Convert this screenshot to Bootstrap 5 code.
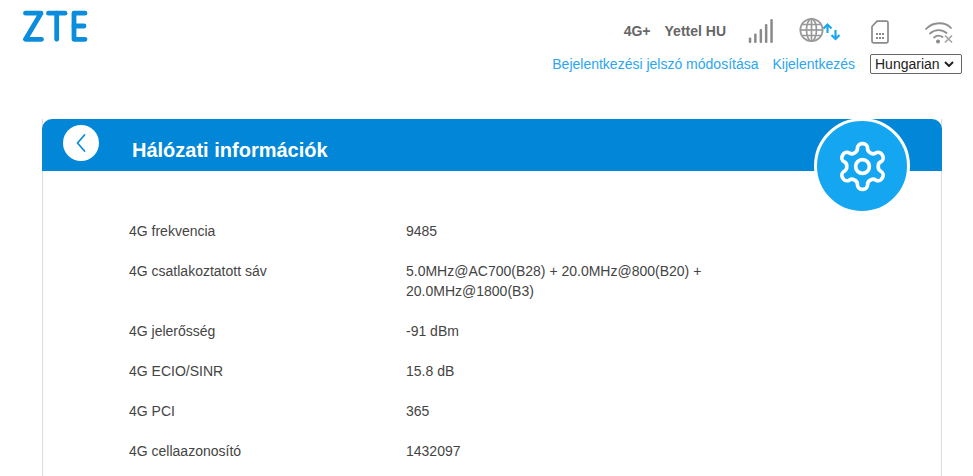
<!DOCTYPE html>
<html lang="hu">
<head>
<meta charset="utf-8">
<title>Hálózati információk</title>
<link rel="stylesheet" href="https://cdn.jsdelivr.net/npm/bootstrap@5.3.0/dist/css/bootstrap.min.css">
<style>
html, body { height: 476px; overflow: hidden; }
body { font-family: "Liberation Sans", Arial, sans-serif; font-size: 14px; color: #444; background: #fff; }
.top-head { height: 119px; padding: 10px 11px 0 23px; }
.status-text { font-weight: 700; font-size: 14px; color: #666; line-height: 16px; }
.status-row { height: 34px; margin-top: 4px; }
.gap-net { margin-left: 14px; margin-right: 21px; }
.ico-signal { margin-right: 26px; }
.ico-globe { margin-right: 31px; margin-top: -2px; }
.ico-sim { margin-right: 36px; margin-top: 2px; }
.ico-wifi { margin-right: 8px; margin-top: 3px; }
.links-row { height: 20px; margin-top: 6px; column-gap: 14px; }
.links-row a { color: #2ba6f0; text-decoration: none; line-height: 20px; }
.lang-select { appearance: none; width: 92px; height: 20px; margin-left: 1px; padding: 0 0 0 4px; font-size: 14px; line-height: 18px; font-family: inherit; color: #222; background: #fff url("data:image/svg+xml,%3Csvg xmlns='http://www.w3.org/2000/svg' width='10' height='6' viewBox='0 0 10 6'%3E%3Cpolyline points='1,1 5,5 9,1' fill='none' stroke='%23222' stroke-width='2'/%3E%3C/svg%3E") no-repeat right 7px center; border: 1px solid #666; border-radius: 2px; }
.info-panel { margin: 0 31px 0 42px; height: 357px; position: relative; border-left: 1px solid #ddd; border-right: 1px solid #ddd; }
.info-head { margin: 0 -1px; height: 52px; background: #0287d8; border-radius: 10px 10px 0 0; padding: 6px 0 0 21px; }
.back-btn { width: 36px; height: 36px; background: #fff; border-radius: 50%; }
.info-title { font-size: 20px; font-weight: 700; color: #fff; line-height: 24px; margin: 13px 0 0 33px; }
.gear-badge { position: absolute; top: -1px; right: 31px; width: 96px; height: 96px; background: #15a6f1; border: 3px solid #fff; border-radius: 50%; }
.info-list { padding: 40px 0 0 86px; }
.info-line { padding: 10px 0; line-height: 20px; }
.info-key { width: 277px; flex: none; }
.info-val { width: 310px; }
</style>
</head>
<body>
<header class="top-head d-flex justify-content-between align-items-start">
  <svg width="66" height="34" viewBox="0 0 66 34" aria-label="ZTE" role="img">
    <g fill="none" stroke="#0a8ddc" stroke-width="4.8" stroke-linecap="round" stroke-linejoin="round">
      <polyline points="2.5,3.200 18,3.200 2.500,29.300 18.500,29.300"/>
      <polyline points="25.500,3.200 42,3.200"/>
      <line x1="33.700" y1="3.200" x2="33.700" y2="29.300"/>
      <polyline points="62,3.200 51,3.200 51,29.300 62,29.300"/>
      <line x1="51" y1="16" x2="61" y2="16"/>
    </g>
  </svg>
  <div class="d-flex flex-column align-items-end">
    <div class="status-row d-flex align-items-center">
      <span class="status-text">4G+</span>
      <span class="status-text gap-net">Yettel HU</span>
      <svg class="ico-signal" width="26" height="24" viewBox="0 0 26 24">
        <g fill="#8a8a8a">
          <rect x="1.800" y="18.500" width="2.500" height="5.500" rx="1"/>
          <rect x="7.100" y="14.500" width="2.500" height="9.500" rx="1"/>
          <rect x="12.600" y="10" width="2.500" height="14" rx="1"/>
          <rect x="17.900" y="5" width="2.500" height="19" rx="1"/>
          <rect x="23.300" y="0" width="2.500" height="24" rx="1"/>
        </g>
      </svg>
      <svg class="ico-globe" width="41" height="26" viewBox="0 0 41 26">
        <g fill="none" stroke="#999" stroke-width="1.700">
          <circle cx="12.500" cy="13" r="11.200"/>
          <ellipse cx="12.500" cy="13" rx="5" ry="11.200"/>
          <line x1="12.500" y1="2" x2="12.500" y2="24"/>
          <line x1="1.300" y1="13" x2="23.700" y2="13"/>
          <path d="M3 7.500h19M3 18.500h19"/>
        </g>
        <g fill="none" stroke="#1ca7ee" stroke-width="2.200">
          <path d="M28.500 16V7.500M24.500 11.500l4-4 4 4"/>
          <path d="M36.500 13v8.500M32.500 18l4 4 4-4"/>
        </g>
      </svg>
      <svg class="ico-sim" width="18" height="24" viewBox="0 0 18 24">
        <path d="M6 1.200h9.500a1.500 1.500 0 0 1 1.500 1.500v18.600a1.500 1.500 0 0 1-1.500 1.500h-13a1.500 1.500 0 0 1-1.500-1.500V6.500z" fill="none" stroke="#8a8a8a" stroke-width="1.700" stroke-linejoin="round"/>
        <g fill="#8a8a8a">
          <rect x="5" y="13" width="2" height="2"/><rect x="8" y="13" width="2" height="2"/><rect x="11" y="13" width="2" height="2"/>
          <rect x="5" y="17" width="2" height="2"/><rect x="8" y="17" width="2" height="2"/><rect x="11" y="17" width="2" height="2"/>
        </g>
      </svg>
      <svg class="ico-wifi" width="29" height="22" viewBox="0 0 29 22">
        <g fill="none" stroke="#8f8f8f" stroke-width="1.800" stroke-linecap="round">
          <path d="M1 7C8-0.500 20-0.500 26 6"/>
          <path d="M5 11.500c5-4.500 12-4.500 16.500-.5"/>
          <path d="M9 15.500c2.500-2.200 6-2.200 8.500-.5"/>
        </g>
        <circle cx="13" cy="19.500" r="2" fill="#8a8a8a"/>
        <path d="M20 13.500l7 7M27 13.500l-7 7" fill="none" stroke="#a5a5a5" stroke-width="1.700"/>
      </svg>
    </div>
    <div class="links-row d-flex align-items-center">
      <a href="#">Bejelentkezési jelszó módosítása</a>
      <a href="#">Kijelentkezés</a>
      <select class="lang-select" aria-label="Nyelv"><option>Hungarian</option></select>
    </div>
  </div>
</header>
<main class="info-panel">
  <div class="info-head d-flex align-items-start">
    <a href="#" class="back-btn d-flex align-items-center justify-content-center" aria-label="Vissza">
      <svg width="12" height="20" viewBox="0 0 12 20"><polyline points="9.500,2 2.500,10 9.500,18" fill="none" stroke="#0a8ddc" stroke-width="1.800" stroke-linecap="round" stroke-linejoin="round"/></svg>
    </a>
    <div class="info-title">Hálózati információk</div>
  </div>
  <div class="gear-badge d-flex align-items-center justify-content-center">
    <svg width="55" height="55" viewBox="0 0 24 24" fill="none" stroke="#fff" stroke-width="1.600" stroke-linejoin="round">
      <path d="M12.220 2h-.440a2 2 0 0 0-2 2v.180a2 2 0 0 1-1 1.730l-.430.250a2 2 0 0 1-2 0l-.150-.080a2 2 0 0 0-2.730.730l-.220.380a2 2 0 0 0 .730 2.730l.150.100a2 2 0 0 1 1 1.720v.510a2 2 0 0 1-1 1.740l-.150.090a2 2 0 0 0-.730 2.730l.220.380a2 2 0 0 0 2.730.730l.150-.080a2 2 0 0 1 2 0l.430.250a2 2 0 0 1 1 1.730V20a2 2 0 0 0 2 2h.440a2 2 0 0 0 2-2v-.180a2 2 0 0 1 1-1.730l.430-.250a2 2 0 0 1 2 0l.150.080a2 2 0 0 0 2.730-.730l.220-.390a2 2 0 0 0-.730-2.730l-.150-.080a2 2 0 0 1-1-1.740v-.500a2 2 0 0 1 1-1.740l.150-.090a2 2 0 0 0 .730-2.730l-.220-.380a2 2 0 0 0-2.730-.730l-.150.080a2 2 0 0 1-2 0l-.430-.250a2 2 0 0 1-1-1.730V4a2 2 0 0 0-2-2z"/>
      <circle cx="12" cy="12" r="3"/>
    </svg>
  </div>
  <div class="info-list">
    <div class="info-line d-flex"><div class="info-key">4G frekvencia</div><div class="info-val">9485</div></div>
    <div class="info-line d-flex"><div class="info-key">4G csatlakoztatott sáv</div><div class="info-val">5.0MHz@AC700(B28) + 20.0MHz@800(B20) + 20.0MHz@1800(B3)</div></div>
    <div class="info-line d-flex"><div class="info-key">4G jelerősség</div><div class="info-val">-91 dBm</div></div>
    <div class="info-line d-flex"><div class="info-key">4G ECIO/SINR</div><div class="info-val">15.8 dB</div></div>
    <div class="info-line d-flex"><div class="info-key">4G PCI</div><div class="info-val">365</div></div>
    <div class="info-line d-flex"><div class="info-key">4G cellaazonosító</div><div class="info-val">1432097</div></div>
  </div>
</main>
<script src="https://cdn.jsdelivr.net/npm/bootstrap@5.3.0/dist/js/bootstrap.bundle.min.js"></script>
</body>
</html>
